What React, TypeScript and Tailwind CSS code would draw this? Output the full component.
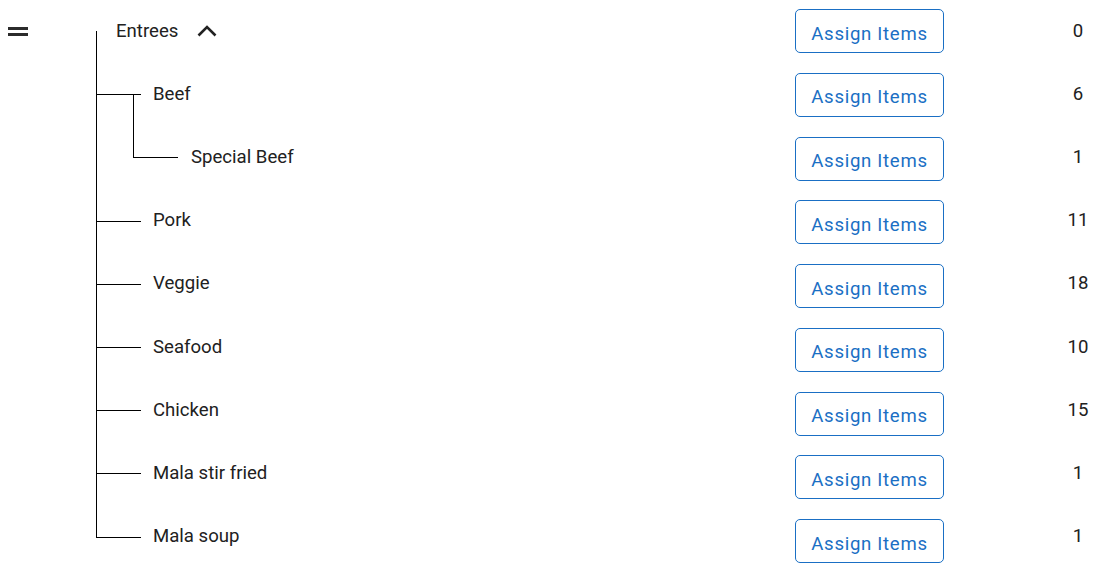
import React from "react";

type Node = { name: string; count: number; depth: 1 | 2; last?: boolean; hasChild?: boolean };

const ROWS: Node[] = [
  { name: "Beef", count: 6, depth: 1, hasChild: true },
  { name: "Special Beef", count: 1, depth: 2, last: true },
  { name: "Pork", count: 11, depth: 1 },
  { name: "Veggie", count: 18, depth: 1 },
  { name: "Seafood", count: 10, depth: 1 },
  { name: "Chicken", count: 15, depth: 1 },
  { name: "Mala stir fried", count: 1, depth: 1 },
  { name: "Mala soup", count: 1, depth: 1, last: true },
];

const FONT = { fontFamily: "Roboto, 'Liberation Sans', sans-serif" };

function TreeRow({ node }: { node: Node }) {
  // vertical trunk at x=96 (relative 0), branch x=133 (relative 37)
  const trunkEnds = node.depth === 1 && node.last;
  return (
    <div className="relative h-[63.2px] flex items-center">
      {/* main trunk */}
      <span
        className={`absolute left-0 w-px bg-black ${trunkEnds ? "top-0 h-[calc(50%+1px)]" : "top-0 bottom-0"}`}
      />
      {node.depth === 1 ? (
        <>
          <span className="absolute left-0 top-1/2 h-px w-[45px] bg-black" />
          {node.hasChild && <span className="absolute left-[37px] top-1/2 bottom-0 w-px bg-black" />}
          <span className="ml-[57px] text-[18.6px] text-[#212121] leading-none">{node.name}</span>
        </>
      ) : (
        <>
          <span className="absolute left-[37px] top-0 h-[calc(50%+1px)] w-px bg-black" />
          <span className="absolute left-[37px] top-1/2 h-px w-[45px] bg-black" />
          <span className="ml-[95px] text-[18.6px] text-[#212121] leading-none">{node.name}</span>
        </>
      )}
    </div>
  );
}

export default function App() {
  return (
    <div className="w-[1110px] h-[575px] bg-white flex overflow-hidden" style={FONT}>
      {/* drag handle */}
      <div className="w-[96px] pl-[8px] pt-[27px]">
        <div className="flex flex-col gap-[3px] w-[20px]">
          <span className="h-[3px] bg-[#2b2b2b]" />
          <span className="h-[3px] bg-[#2b2b2b]" />
        </div>
      </div>

      {/* tree */}
      <div className="w-[699px] -mt-[0.6px]">
        <div className="relative h-[63.2px] flex items-center">
          <span className="absolute left-0 top-1/2 bottom-0 w-px bg-black" />
          <span className="ml-[20px] text-[18.6px] text-[#212121] leading-none">Entrees</span>
          <svg className="ml-[19px] -mt-[1px]" width="20" height="13" viewBox="0 0 20 13">
            <polyline points="1.5,11.5 10,3 18.5,11.5" fill="none" stroke="#222" strokeWidth="2.6" />
          </svg>
        </div>
        {ROWS.map((n) => (
          <TreeRow key={n.name} node={n} />
        ))}
      </div>

      {/* buttons */}
      <div className="flex flex-col gap-[19.75px] pt-[9px] w-[149px]">
        {[0, ...ROWS.map((r) => r.count)].map((_, i) => (
          <button
            key={i}
            className="h-[44px] w-[149px] rounded-[5px] border border-[#1a6fc4] text-[#1a6fc4] text-[18.6px] tracking-[0.7px] leading-none pt-[6px]"
          >
            Assign Items
          </button>
        ))}
      </div>

      {/* counts */}
      <div className="ml-[114px] w-[40px] -mt-[0.6px]">
        {[0, ...ROWS.map((r) => r.count)].map((c, i) => (
          <div key={i} className="h-[63.2px] flex items-center justify-center text-[18.6px] text-[#212121] leading-none">
            <span>{c}</span>
          </div>
        ))}
      </div>
    </div>
  );
}
